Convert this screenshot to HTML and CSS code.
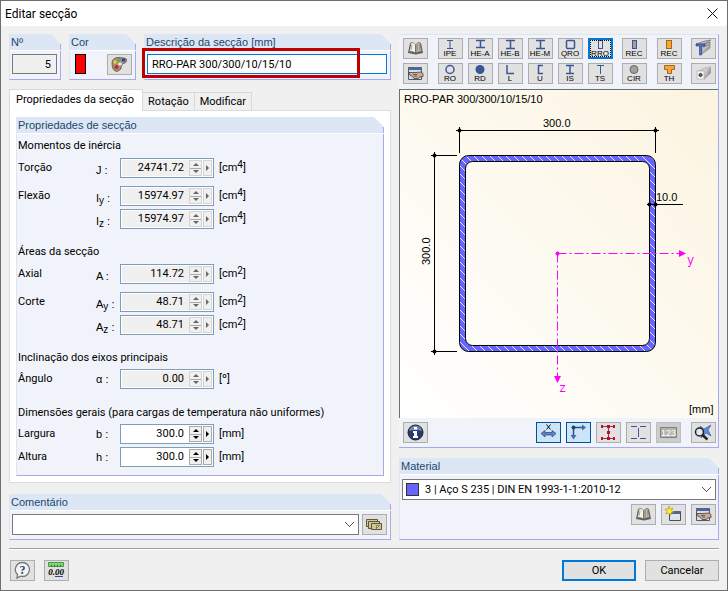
FILE: index.html
```html
<!DOCTYPE html>
<html lang="pt">
<head>
<meta charset="utf-8">
<title>Editar secção</title>
<link rel="stylesheet" href="styles.css">
</head>
<body>
<svg class="sprite" aria-hidden="true">
  <linearGradient id="metal" x1="0" y1="0" x2="1" y2="1"><stop offset="0" stop-color="#f4f4f4"/><stop offset="1" stop-color="#6c6c6c"/></linearGradient>
  <symbol id="book" viewBox="0 0 23 19">
    <path d="M4 14 6 4l5 1.500 1 1 1-1L17 4l2 10-7 1.500z" fill="#5a5f6e"/>
    <path d="M5.500 12.500 7 3.500q3-.5 4.500 2v8.500q-2.500-2-6-1.500z" fill="#f6f3ea" stroke="#6b665c" stroke-width=".7"/>
    <path d="M17.500 12.500 16 3.500q-3-.5-4 2v8.500q2.500-2 5.500-1.500z" fill="#c4beb0" stroke="#6b665c" stroke-width=".7"/>
    <path d="M13.500 5v7M8 5.500l-.6 5M15.200 5l.5 6" stroke="#948d7e" stroke-width=".8"/>
  </symbol>
  <symbol id="hand" viewBox="0 0 23 19">
    <path d="M4.500 3.500h13v12h-13z" fill="#d9dde6" stroke="#4a5878"/>
    <path d="M4 3h14v3H4z" fill="#4e6596"/>
    <path d="M5 8.500h7l5-.5 2 1.500v3l-3 .5-2 1.500H10l-1.500-2L5 10.500z" fill="#c9ab96" stroke="#4b3f38" stroke-width=".8"/>
    <path d="M9 10.500h4M10 12h3" stroke="#5f4638" stroke-width=".8"/>
  </symbol>
</svg>
<main class="window">
  <header class="titlebar">
    <h1>Editar secção</h1>
    <button class="close" aria-label="Fechar"><svg width="11" height="11" viewBox="0 0 11 11"><path d="m.5.5 10 10m0-10-10 10" stroke="#111" fill="none"/></svg></button>
  </header>

  <div class="content">
    <div class="columns">
      <div class="left">
        <div class="top-row">
          <section class="panel number">
            <h2><label for="no">Nº</label></h2>
            <div class="panel-body"><input id="no" class="no-input" value="5" readonly></div>
          </section>
          <section class="panel color">
            <h2>Cor</h2>
            <div class="panel-body color-body">
              <span class="swatch"></span>
              <button class="tool" aria-label="Escolher cor"><svg viewBox="0 0 23 19">
                <path d="M4 8q0-5 6-5.500l6 .5q3 0 2.500 3-.5 2-3 2.500-2 .5-2 3 0 3.500-4.500 5Q4 16 4 8z" fill="#a58f78" stroke="#5d5145" stroke-width=".8"/>
                <circle cx="11" cy="5" r="1.500" fill="#3fb54a"/><circle cx="15.500" cy="5" r="1.600" fill="#1c30d8"/><circle cx="7" cy="7" r="1.700" fill="#e6d92c"/><circle cx="8.500" cy="12" r="2" fill="#d42222"/><ellipse cx="12" cy="9" rx="2" ry="1.500" fill="#ece7df"/>
              </svg></button>
            </div>
          </section>
          <section class="panel description">
            <h2><label for="desc">Descrição da secção [mm]</label></h2>
            <div class="panel-body"><input id="desc" class="desc-input" value="RRO-PAR 300/300/10/15/10"></div>
            <span class="highlight"></span>
          </section>
        </div>

        <div class="tabs" role="tablist">
          <button class="tab active" role="tab" aria-selected="true">Propriedades da secção</button>
          <button class="tab" role="tab">Rotação</button>
          <button class="tab" role="tab">Modificar</button>
        </div>
        <div class="tab-page">
          <section class="panel">
            <h2>Propriedades de secção</h2>
            <div class="form">
              <div class="section">
                <h3>Momentos de inércia</h3>
                <div class="field"><span>Torção</span><label class="sym low" for="f1">J :</label><span class="spin off"><input id="f1" value="24741.72" readonly><button class="updown" aria-label="Ajustar"></button><button class="more" aria-label="Mais"></button></span><span class="unit">[cm<sup>4</sup>]</span></div>
                <div class="pair">
                  <div class="field"><span>Flexão</span><label class="sym low" for="f2">I<sub>y</sub> :</label><span class="spin off"><input id="f2" value="15974.97" readonly><button class="updown" aria-label="Ajustar"></button><button class="more" aria-label="Mais"></button></span><span class="unit">[cm<sup>4</sup>]</span></div>
                  <div class="field"><span></span><label class="sym low" for="f3">I<sub>z</sub> :</label><span class="spin off"><input id="f3" value="15974.97" readonly><button class="updown" aria-label="Ajustar"></button><button class="more" aria-label="Mais"></button></span><span class="unit">[cm<sup>4</sup>]</span></div>
                </div>
              </div>
              <div class="section">
                <h3>Áreas da secção</h3>
                <div class="field"><span>Axial</span><label class="sym low" for="f4">A :</label><span class="spin off"><input id="f4" value="114.72" readonly><button class="updown" aria-label="Ajustar"></button><button class="more" aria-label="Mais"></button></span><span class="unit">[cm<sup>2</sup>]</span></div>
                <div class="pair">
                  <div class="field"><span>Corte</span><label class="sym low" for="f5">A<sub>y</sub> :</label><span class="spin off"><input id="f5" value="48.71" readonly><button class="updown" aria-label="Ajustar"></button><button class="more" aria-label="Mais"></button></span><span class="unit">[cm<sup>2</sup>]</span></div>
                  <div class="field"><span></span><label class="sym low" for="f6">A<sub>z</sub> :</label><span class="spin off"><input id="f6" value="48.71" readonly><button class="updown" aria-label="Ajustar"></button><button class="more" aria-label="Mais"></button></span><span class="unit">[cm<sup>2</sup>]</span></div>
                </div>
              </div>
              <div class="section">
                <h3>Inclinação dos eixos principais</h3>
                <div class="field"><span>Ângulo</span><label class="sym" for="f7">α :</label><span class="spin off"><input id="f7" value="0.00" readonly><button class="updown" aria-label="Ajustar"></button><button class="more" aria-label="Mais"></button></span><span class="unit">[º]</span></div>
              </div>
              <div class="section">
                <h3>Dimensões gerais (para cargas de temperatura não uniformes)</h3>
                <div class="pair">
                  <div class="field"><span>Largura</span><label class="sym" for="f8">b :</label><span class="spin"><input id="f8" value="300.0"><button class="updown" aria-label="Ajustar"></button><button class="more" aria-label="Mais"></button></span><span class="unit">[mm]</span></div>
                  <div class="field"><span>Altura</span><label class="sym" for="f9">h :</label><span class="spin"><input id="f9" value="300.0"><button class="updown" aria-label="Ajustar"></button><button class="more" aria-label="Mais"></button></span><span class="unit">[mm]</span></div>
                </div>
              </div>
            </div>
          </section>
        </div>

        <section class="panel comment">
          <h2><label for="comment">Comentário</label></h2>
          <div class="panel-body comment-body">
            <select id="comment" class="combo"><option></option></select>
            <button class="tool" aria-label="Comentários guardados"><svg viewBox="0 0 23 19">
              <g fill="#cfc49a" stroke="#5e5636"><path d="M3.500 4.500h11v7h-11z"/><path d="M5.500 6.500h11v7h-11z"/><path d="M8.500 8.500h10v6h-10z"/></g><path d="M13.500 10.500h3l-3 3z" fill="#fff8d8" stroke="#5e5636" stroke-width=".7"/>
            </svg></button>
          </div>
        </section>
      </div>

      <div class="right">
        <section class="viewer">
          <div class="tool-rows">
            <div class="tool-row">
              <button class="tool" aria-label="Biblioteca"><svg><use href="#book"/></svg></button>
              <div class="group">
                <button class="tool"><svg viewBox="0 0 23 19"><path d="M8 1.500h6M8 9.500h6M11 2v7" class="ln"/><text x="11" y="17">IPE</text></svg></button>
                <button class="tool"><svg viewBox="0 0 23 19"><path d="M7 1.500h9M7 8.500h9M11.500 2v6" class="ln b"/><text x="11" y="17">HE-A</text></svg></button>
                <button class="tool"><svg viewBox="0 0 23 19"><path d="M7 1.500h9M7 9.500h9M11.500 2v7" class="ln b"/><text x="11" y="17">HE-B</text></svg></button>
                <button class="tool"><svg viewBox="0 0 23 19"><path d="M7 1.500h9M7 9.500h9M11.500 2v7" class="ln b"/><text x="11" y="17">HE-M</text></svg></button>
                <button class="tool"><svg viewBox="0 0 23 19"><rect x="7.500" y="1.500" width="8" height="8" rx="1" class="ln b"/><text x="11" y="17">QRO</text></svg></button>
                <button class="tool selected"><svg viewBox="0 0 23 19"><rect x="9.500" y="1.500" width="4" height="8" class="ln"/><text x="11" y="17">RRO</text></svg></button>
              </div>
              <button class="tool"><svg viewBox="0 0 23 19"><rect x="9.500" y="1.500" width="4" height="8" fill="#a0a0a0" stroke="#3d5596"/><text x="11" y="17">REC</text></svg></button>
              <button class="tool"><svg viewBox="0 0 23 19"><rect x="8.500" y="1.500" width="5" height="8" fill="#ffa42c" stroke="#9c6a2a"/><text x="11" y="17">REC</text></svg></button>
              <button class="tool" aria-label="Perfil composto"><svg viewBox="0 0 23 19"><path d="M4 5 13 2l6-1-7 4zM10 6l8-3v2l-7 3z" fill="#c0c0c0" stroke="#777" stroke-width=".8"/><path d="m10 9 8-4v4l-8 6z" fill="url(#metal)" stroke="#777" stroke-width=".6"/><path d="M4 5h9v2H9.500v9h-2V7H4z" fill="#5a70d0" stroke="#233677" stroke-width=".6"/></svg></button>
            </div>
            <div class="tool-row">
              <button class="tool" aria-label="Editar biblioteca"><svg><use href="#hand"/></svg></button>
              <div class="group">
                <button class="tool"><svg viewBox="0 0 23 19"><circle cx="11" cy="5.500" r="4" class="ln b"/><text x="11" y="17">RO</text></svg></button>
                <button class="tool"><svg viewBox="0 0 23 19"><circle cx="11" cy="5.500" r="4.500" fill="#3d5596"/><text x="11" y="17">RD</text></svg></button>
                <button class="tool"><svg viewBox="0 0 23 19"><path d="M8 1v8.500h7" class="ln b"/><text x="11" y="17">L</text></svg></button>
                <button class="tool"><svg viewBox="0 0 23 19"><path d="M14 1.500H9.500v8H14" class="ln b"/><text x="11" y="17">U</text></svg></button>
                <button class="tool"><svg viewBox="0 0 23 19"><path d="M7 1.500h8M7 9.500h8M11 2v7" class="ln b"/><text x="11" y="17">IS</text></svg></button>
                <button class="tool"><svg viewBox="0 0 23 19"><path d="M8 1.500h7M11.500 2v8" class="ln"/><text x="11" y="17">TS</text></svg></button>
              </div>
              <button class="tool"><svg viewBox="0 0 23 19"><circle cx="11" cy="5.500" r="4" fill="#a0a0a0" stroke="#666"/><text x="11" y="17">CIR</text></svg></button>
              <button class="tool"><svg viewBox="0 0 23 19"><path d="M6.500 1.500h10v4h-3v4h-4v-4h-3z" fill="#ffa42c" stroke="#9c6a2a"/><text x="11" y="17">TH</text></svg></button>
              <button class="tool" aria-label="Perfil maciço"><svg viewBox="0 0 23 19"><path d="m5 7 8-4 6-1-7 5z" fill="#c6c6c6"/><path d="m12 7 7-5v7l-7 7z" fill="url(#metal)"/><path d="M5 7h7v8H5z" fill="#f5f5f5" stroke="#999" stroke-width=".5"/><circle cx="8.500" cy="11" r="1.600" fill="#666" stroke="#222" stroke-width=".8"/></svg></button>
            </div>
          </div>

          <svg class="drawing" viewBox="1 1 318 328" role="img" aria-label="Secção RRO-PAR 300/300/10/15/10">
            <defs>
              <linearGradient id="paper" x1="0" y1="1" x2="1" y2="0"><stop offset="0" stop-color="#fff"/><stop offset="1" stop-color="#fbf4e0"/></linearGradient>
              <pattern id="hatch" width="8" height="8" patternUnits="userSpaceOnUse"><path d="M0 0h8v8H0z" fill="#6666ff"/><path d="m-1-1 10 10" stroke="#e4e4ff"/></pattern>
            </defs>
            <path d="M0 0h320v330H0z" fill="url(#paper)"/>
            <text x="5" y="14">RRO-PAR 300/300/10/15/10</text>
            <path fill-rule="evenodd" fill="url(#hatch)" stroke="#000" d="M69.500 66.500h178a9 9 0 0 1 9 9v178a9 9 0 0 1-9 9h-178a9 9 0 0 1-9-9v-178a9 9 0 0 1 9-9zM73.500 72.500a7 7 0 0 0-7 7v170a7 7 0 0 0 7 7h170a7 7 0 0 0 7-7v-170a7 7 0 0 0-7-7z"/>
            <path d="M57 41.500h203M60.500 38v26M256.500 38v26M35.500 63v203M32 66.500h26M32 262.500h26M248 115.500h36" stroke="#000" fill="none"/>
            <g><circle cx="60.500" cy="41.500" r="2"/><circle cx="256.500" cy="41.500" r="2"/><circle cx="35.500" cy="66.500" r="2"/><circle cx="35.500" cy="262.500" r="2"/><circle cx="250.500" cy="115.500" r="2"/><circle cx="256.500" cy="115.500" r="2"/></g>
            <text x="144" y="38">300.0</text>
            <text x="257" y="112">10.0</text>
            <text transform="translate(31 176) rotate(-90)">300.0</text>
            <g stroke="#f0f" fill="none" stroke-dasharray="9 3 2 3"><path d="M158.500 164.500H281"/><path d="M158.500 164.500V289"/></g>
            <g fill="#f0f"><circle cx="158.500" cy="164.500" r="2"/><path d="m280 161 7 3.500-7 3.500zM155 287h7l-3.500 7z"/><text class="axis" x="288" y="175">y</text><text class="axis" x="160" y="303">z</text></g>
            <text x="290" y="324">[mm]</text>
          </svg>

          <div class="view-tools">
            <button class="tool" aria-label="Informação"><svg viewBox="0 0 23 19"><circle cx="11.500" cy="9.500" r="7.500" fill="#2c3a66" stroke="#151c36"/><path d="M5 8q1-5 6.500-5.500Q17 3 18 8q-6-2-13 0z" fill="#7487b8"/><path d="M10 4h3v2.500h-3zM9 8h4v5h1v2H9v-2h1v-3H9z" fill="#fff"/></svg></button>
            <div class="group">
              <button class="tool on" aria-label="Dimensões"><svg viewBox="0 0 23 19"><path d="m9.500 1.500 4 5m0-5-4 5" stroke="#111" fill="none"/><path d="m4 10.500 4-3v2h7v-2l4 3-4 3.500v-2H8v2z" fill="#5f82c4" stroke="#28447e" stroke-width=".7"/></svg></button>
              <button class="tool on" aria-label="Eixos"><svg viewBox="0 0 23 19"><path d="M6.500 13V4.500H17" fill="none" stroke="#314d85" stroke-width="1.500"/><path d="m15 1.500 4 3-4 3zM3.500 12h6l-3 4.500z" fill="#4667a8"/><circle cx="6.500" cy="4.500" r="2" fill="#27406f"/></svg></button>
              <button class="tool" aria-label="Pontos de tensão"><svg viewBox="0 0 23 19"><path d="M4 3.500h14M4 15.500h14M11.500 4v11" class="ln"/><path d="M4 2h2v3H4zM10 2h3v3h-3zM16 2h2v3h-2zM4 14h2v3H4zM10 14h3v3h-3zM16 14h2v3h-2zM10 8h3v3h-3z" fill="#e1000f"/></svg></button>
              <button class="tool" aria-label="Contorno"><svg viewBox="0 0 23 19"><path d="M4 3.500h6m3 0h6M4 15.500h6m3 0h6M11.500 5v9" class="ln"/></svg></button>
              <button class="tool dim" aria-label="Numeração" disabled><svg viewBox="0 0 23 19"><path d="M3.500 4.500h16v10h-16z" fill="#b4b4ae" stroke="#80807a"/><text x="11.500" y="13" class="digits">123</text></svg></button>
            </div>
            <button class="tool last" aria-label="Ver tudo"><svg viewBox="0 0 23 19"><path d="m8 3 4 3 7-4-3 5 3 6-5-3-5 5 2-6z" fill="#5e8add" stroke="#2a4d93" stroke-width=".6"/><circle cx="7.500" cy="9" r="4" fill="#e4ecf4" fill-opacity=".7" stroke="#222" stroke-width="1.500"/><path d="m10.500 12 5 4.500" stroke="#222" stroke-width="2.500"/></svg></button>
          </div>
        </section>

        <section class="panel material">
          <h2><label for="material">Material</label></h2>
          <div class="panel-body">
            <div class="material-select">
              <select id="material" class="combo"><option>3 | Aço S 235 | DIN EN 1993-1-1:2010-12</option></select>
              <span class="chip"></span>
            </div>
            <div class="material-tools group">
              <button class="tool" aria-label="Biblioteca de materiais"><svg><use href="#book"/></svg></button>
              <button class="tool" aria-label="Novo material"><svg viewBox="0 0 23 19"><path d="M7.500 6.500h11v9h-11z" fill="#dfe3ea" stroke="#4a4f5c"/><path d="M8 6h10v3H8z" fill="#50658f"/><path d="m7 1 1 3 3-1-1.500 2.500L12 7 9 8l-.5 2.500L6.500 8 4 9l1-2.500L3 4l3 .2z" fill="#ffea31" stroke="#968300" stroke-width=".5"/></svg></button>
              <button class="tool" aria-label="Editar material"><svg><use href="#hand"/></svg></button>
            </div>
          </div>
        </section>
      </div>
    </div>

    <footer class="footer">
      <button class="tool" aria-label="Ajuda"><svg viewBox="0 0 23 19"><path d="M11.500 1.500a7 7 0 0 1 0 14q-1 0-2-.3L6 17l.5-3.500a7 7 0 0 1 5-12z" fill="#f5f5f5" stroke="#777" stroke-width="1.300"/><text x="11.500" y="13" class="help">?</text></svg></button>
      <button class="tool" aria-label="Unidades e casas decimais"><svg viewBox="0 0 23 19"><path d="M3.500 1.500h15v4h-15z" fill="#7fd07a" stroke="#4a9a4a"/><path d="M6.500 4v2m3-2v2m3-2v2m3-2v2" stroke="#277c2a"/><text x="11" y="14" class="decimals">0.00</text><path d="M10 15.500h8" stroke="#304a96"/></svg></button>
      <div class="actions">
        <button class="action primary">OK</button>
        <button class="action">Cancelar</button>
      </div>
    </footer>
  </div>
</main>
</body>
</html>
```
FILE: styles.css
```css
* { box-sizing: border-box; }

:root {
  --ui: Roboto, "Noto Sans", sans-serif;
  --plain: "Liberation Sans", Arial, sans-serif;
  --head: #dce6f4;
  --pane: #f0f4fa;
  --edge: #a8a8ec;
}

body {
  margin: 0;
  font: 11px/18px var(--ui);
  color: #000;
}

h1, h2, h3 { margin: 0; font-weight: 400; }
button, input, select { font: inherit; color: inherit; margin: 0; padding: 0; border-radius: 0; }

.sprite { position: absolute; width: 0; height: 0; }

.window {
  min-height: 100vh;
  background: #f0f0f0;
  border: 1px solid #6e6e6e;
}

.titlebar {
  display: flex;
  align-items: center;
  justify-content: space-between;
  height: 25px;
  padding: 0 9px 0 4px;
  background: #fff;
}
.titlebar h1 { font-size: 12px; }
.close { display: flex; border: 0; background: none; }

.content { padding: 8px 8px 0; }

.columns {
  display: grid;
  grid-template-columns: minmax(0, 382fr) minmax(0, 320fr);
  gap: 8px;
}
.left, .right { display: flex; flex-direction: column; }

/* Group box with a cut top-right corner */
.panel {
  position: relative;
  border-left: 1px solid var(--head);
  border-bottom: 1px solid var(--edge);
  background:
    linear-gradient(var(--edge), var(--edge)) right 0 top 10px / 1px calc(100% - 10px) no-repeat,
    linear-gradient(var(--pane), var(--pane)) 0 16px / 100% 100% no-repeat;
}
.panel h2 {
  margin-right: 1px;
  padding-left: 1px;
  height: 16px;
  background: var(--head);
  clip-path: polygon(0 0, calc(100% - 9px) 0, 100% 9px, 100% 100%, 0 100%);
  font: 11px/16px var(--plain);
  color: #1c466e;
}
.panel-body { padding: 4px 4px 4px 2px; border-top: 1px solid #fff; }

.top-row {
  display: grid;
  grid-template-columns: 52px 67px 1fr;
  gap: 8px;
  height: 46px;
}
.top-row .panel-body { padding-top: 3px; }
.no-input {
  display: block;
  width: 100%;
  height: 20px;
  padding-right: 5px;
  border: 1px solid #7a7a7a;
  background: #f0f0f0;
  text-align: right;
}
.color-body { display: flex; justify-content: space-between; padding-left: 5px; }
.swatch { width: 11px; height: 20px; border: 1px solid #000; background: #f00; }
.desc-input {
  display: block;
  width: 100%;
  height: 20px;
  padding-left: 4px;
  border: 1px solid #0078d7;
  background: #fff;
  outline: 0;
}
.highlight {
  position: absolute;
  left: -3px;
  right: 31px;
  top: 14px;
  bottom: 1px;
  border: 3px solid #c00000;
  pointer-events: none;
}

.tabs { display: flex; align-items: flex-end; margin-top: 9px; height: 21px; }
.tab {
  height: 18px;
  padding: 0 5px;
  border: 1px solid #d9d9d9;
  border-width: 1px 1px 0 0;
  background: #f0f0f0;
}
.tab.active {
  height: 22px;
  margin-bottom: -1px;
  padding: 0 8px 2px 6px;
  border-left-width: 1px;
  background: #fff;
  z-index: 1;
}
.tab-page { padding: 6px; border: 1px solid #dcdcdc; background: #fff; }

.form {
  display: flex;
  flex-direction: column;
  gap: 15px;
  padding: 3px 1px 8px;
  border-top: 1px solid #fff;
}
.section h3 { margin-bottom: 2px; font-size: 11px; line-height: 18px; }
.field {
  display: grid;
  grid-template-columns: 78px 24px 94px 1fr;
  align-items: center;
  height: 20px;
}
.pair { display: flex; flex-direction: column; gap: 3px; }
.field + .pair { margin-top: 8px; }
.sym { font-family: var(--plain); white-space: nowrap; }
.sym.low { padding-top: 4px; }
.sym sub, .unit sup { font-size: 10px; line-height: 0; }
.sym sub { vertical-align: -2px; }
.unit sup { vertical-align: 3px; }
.unit { padding-left: 5px; }

.spin {
  display: flex;
  height: 20px;
  padding: 1px;
  border: 1px solid #7f9db9;
  background: #fff;
}
.spin input {
  flex: 1;
  min-width: 0;
  padding-right: 5px;
  border: 0;
  background: #fff;
  text-align: right;
}
.spin.off input { background: #f0f0f0; }
.spin button { position: relative; border: 1px solid #aaa; background: #f0f0f0; flex: none; }
.spin.off button { border-color: #d4d4d4; }
.spin .updown {
  width: 13px;
  margin-right: 1px;
  background: linear-gradient(#aaa, #aaa) center / 100% 1px no-repeat #f0f0f0;
}
.more { width: 9px; }
.off .updown, .off .more { color: #666; }
.updown::before, .updown::after, .more::before {
  content: "";
  position: absolute;
  border: 3px solid transparent;
}
.updown::before { left: 3px; top: -1px; border-bottom-color: currentColor; }
.updown::after { left: 3px; bottom: -1px; border-top-color: currentColor; }
.more::before { left: 2px; top: 4px; border-right-width: 0; border-left-color: currentColor; }

.comment { margin-top: 11px; }
.comment-body { display: flex; gap: 3px; padding-top: 3px; }

.combo {
  appearance: none;
  flex: 1;
  width: 100%;
  min-width: 0;
  height: 21px;
  border: 1px solid #7a7a7a;
  background:
    linear-gradient(45deg, transparent 42%, #555 42% 58%, transparent 58%) right 8px center / 5px 5px no-repeat,
    linear-gradient(-45deg, transparent 42%, #555 42% 58%, transparent 58%) right 4px center / 5px 5px no-repeat,
    #fff;
}

.tool {
  display: block;
  flex: none;
  width: 25px;
  height: 21px;
  border: 1px solid #adadad;
  background: #e1e1e1;
}
.tool svg { display: block; width: 23px; height: 19px; }
.tool text { font: 8px var(--plain); text-anchor: middle; fill: #000; }
.tool .ln { fill: none; stroke: #3d5596; }
.tool .b { stroke-width: 1.5; }
.tool text.digits { font: 9px var(--plain); fill: #fff; }
.tool text.help { font: bold 12px "Liberation Serif", serif; fill: #26407f; }
.tool text.decimals { font: italic bold 9px "Liberation Serif", serif; }
.tool.selected { border: 0; padding: 1px; box-shadow: inset 0 0 0 2px #0078d7; outline: 1px dotted #000; outline-offset: -3px; }
.tool.on { border-color: #005499; background: #cce4f7; }
.tool.dim { border-color: #bfbfbf; background: #ccc; }

.viewer {
  border: solid var(--head);
  border-width: 1px 0;
  border-bottom-color: var(--edge);
  border-right: 1px solid var(--edge);
  background: var(--pane);
}
.tool-rows { display: flex; flex-direction: column; gap: 4px; padding: 3px 2px 5px 4px; }
.tool-row, .view-tools { display: flex; justify-content: space-between; }
.group { display: flex; gap: 5px; }
.drawing { display: block; width: 100%; border: 1px solid #6e6e6e; border-width: 1px 0 0 1px; }
.drawing text { font: 11px var(--plain); }
.drawing text.axis { font: 12px "Liberation Mono", monospace; }
.view-tools { padding: 4px 2px 4px 4px; }
.view-tools .group { margin-left: auto; }
.view-tools .last { margin-left: 10px; }

.material { margin-top: 10px; flex: 1; }
.material .panel-body { padding-right: 3px; }
.material-select { position: relative; }
.material .combo { display: block; padding-left: 22px; }
.chip {
  position: absolute;
  left: 4px;
  top: 4px;
  width: 13px;
  height: 13px;
  border: 1px solid #333;
  background: #6666ff;
}
.material-tools { justify-content: flex-end; margin-top: 4px; }

.footer {
  display: flex;
  gap: 9px;
  margin-top: 8px;
  padding: 11px 0 9px 1px;
  border-top: 1px solid #a0a0a0;
  box-shadow: inset 0 1px #fff;
}
.actions { display: flex; gap: 9px; margin-left: auto; }
.action {
  width: 74px;
  height: 21px;
  border: 1px solid #adadad;
  background: #e1e1e1;
}
.action.primary { border: 2px solid #0078d7; }
```
